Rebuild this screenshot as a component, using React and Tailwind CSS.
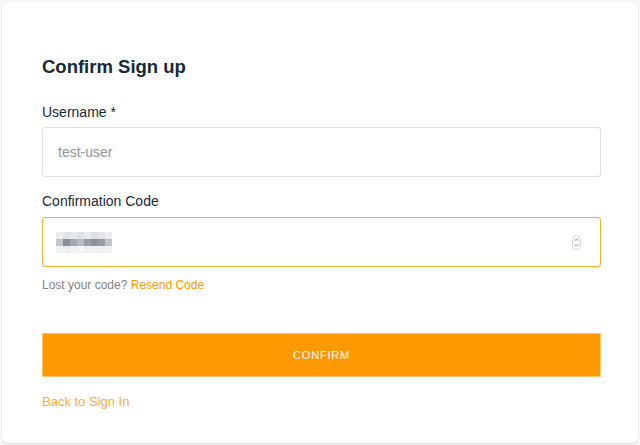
import { useState } from 'react';

// pixelated (blurred) confirmation code, as in the screenshot
const codePixels = [
  ['#eceef0', '#e2e5e8', '#e6e8eb', '#dfe2e5', '#e9ebee', '#e0e3e6', '#e4e7ea', '#eceef0'],
  ['#c3c8cd', '#878e97', '#a3a9b0', '#b9bec3', '#979ea6', '#8a919a', '#969da5', '#bfc4c9'],
  ['#f0f1f3', '#eceef0', '#f1f2f4', '#f4f5f6', '#eef0f2', '#eff1f3', '#eef0f2', '#f1f2f4'],
];

function Spinner() {
  return (
    <svg width="9" height="15" viewBox="0 0 9 15" className="mr-[2px]">
      <rect x="0.5" y="0.5" width="8" height="14" rx="4" fill="#fff" stroke="#d4d7db" />
      <path d="M2.8 5.6 L4.5 3.9 L6.2 5.6" fill="none" stroke="#6b7280" strokeWidth="0.9" />
      <path d="M2.8 9.4 L4.5 11.1 L6.2 9.4" fill="none" stroke="#6b7280" strokeWidth="0.9" />
    </svg>
  );
}

export default function App() {
  const [username, setUsername] = useState('');

  return (
    <div className="w-[640px] h-[445px] bg-[#f7f7f7] p-[2px] font-['Liberation_Sans',Arial,sans-serif]">
      <div className="h-[441px] bg-white rounded-md shadow-[0_1px_2px_rgba(0,0,0,0.12)] px-[40px] pt-[54px]">
        <h1 className="text-[18.5px] leading-[22px] font-bold text-[#152939]">Confirm Sign up</h1>

        <label className="block mt-[25px] text-[14px] leading-[18px] text-[#152939]">Username *</label>
        <input
          value={username}
          onChange={(e) => setUsername(e.target.value)}
          placeholder="test-user"
          className="mt-[6px] w-[559px] h-[50px] px-[15px] text-[14px] text-[#152939] placeholder:text-[#8e959d] border border-[#dcdfe2] rounded-[3px] outline-none"
        />

        <label className="block mt-[15px] text-[14px] leading-[18px] text-[#152939]">Confirmation Code</label>
        <div className="mt-[7px] w-[559px] h-[50px] pl-[13px] pr-[17px] flex items-center justify-between border border-[#ffac31] rounded-[3px]">
          <div className="flex flex-col">
            {codePixels.map((row, i) => (
              <div key={i} className="flex">
                {row.map((c, j) => (
                  <div key={j} className="w-[7px] h-[7px]" style={{ backgroundColor: c }} />
                ))}
              </div>
            ))}
          </div>
          <Spinner />
        </div>

        <p className="mt-[10px] text-[12px] leading-[16px] text-[#828282]">
          Lost your code? <a className="text-[#ff9900] cursor-pointer">Resend Code</a>
        </p>

        <button className="mt-[40px] w-[559px] h-[44px] bg-[#ff9900] text-white text-[11px] tracking-[0.8px] border border-[#ffc36b]">
          CONFIRM
        </button>

        <p className="mt-[17px] text-[13px] leading-[16px]">
          <a className="text-[#ffac31] cursor-pointer">Back to Sign In</a>
        </p>
      </div>
    </div>
  );
}
